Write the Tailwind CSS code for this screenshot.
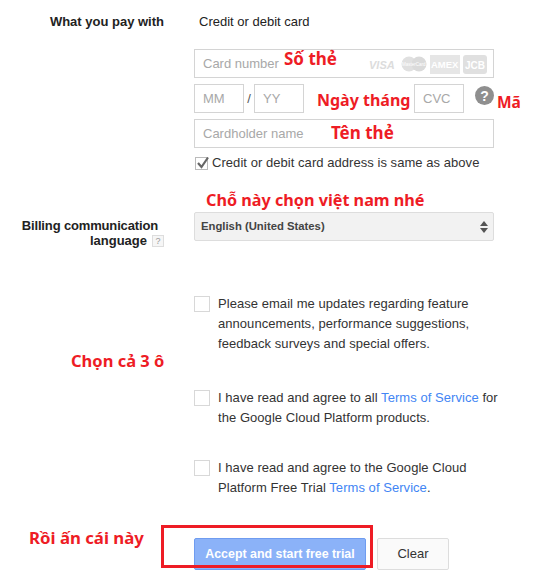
<!DOCTYPE html>
<html lang="en">
  <head>
    <meta charset="UTF-8">
    <title>Billing</title>
    <script src="https://cdn.jsdelivr.net/npm/@tailwindcss/browser@4"></script>
  </head>
  <body class="bg-white">
    <div class="relative w-[540px] h-[579px] overflow-hidden font-['Liberation_Sans',Arial,sans-serif] text-[13px] leading-5 text-[#333]">
      <!-- payment -->
      <div class="flex pt-[12px]">
        <div class="w-[164px] text-right font-bold text-[#222]">What you pay with</div>
        <div class="ml-[30px] w-[300px]">
          <div class="pl-[5px] text-[#222]">Credit or debit card</div>
          <div class="mt-[17px] h-[29px] border border-[#d4d4d4] flex items-center pl-[8px] pr-[3px] text-[#a8a8a8]">
            <span>Card number</span>
            <svg class="ml-auto" width="122" height="20" viewBox="0 0 122 20">
              <text x="1" y="14.500" font-family="Liberation Sans" font-weight="bold" font-style="italic" font-size="11" fill="#dcdcdc">VISA</text>
              <circle cx="41" cy="10" r="7.500" fill="#e0e0e0"/>
              <circle cx="51" cy="10" r="7.500" fill="#dadada"/>
              <text x="34" y="12" font-family="Liberation Sans" font-size="4.500" fill="#fff">MasterCard</text>
              <rect x="62" y="1" width="30" height="19" fill="#e6e6e6"/>
              <text x="63" y="14" font-family="Liberation Sans" font-weight="bold" font-size="9.500" fill="#fff">AMEX</text>
              <rect x="95" y="1" width="24" height="19" rx="3" fill="#e0e0e0"/>
              <text x="97" y="14.500" font-family="Liberation Sans" font-weight="bold" font-size="10" fill="#fff">JCB</text>
            </svg>
          </div>
          <div class="mt-[6px] flex items-center">
            <div class="w-[50px] h-[29px] border border-[#d4d4d4] flex items-center pl-[8px] text-[#a8a8a8]">MM</div>
            <span class="w-[10px] text-center text-[#555]">/</span>
            <div class="w-[50px] h-[29px] border border-[#d4d4d4] flex items-center pl-[8px] text-[#a8a8a8]">YY</div>
            <div class="ml-[110px] w-[50px] h-[29px] border border-[#d4d4d4] flex items-center pl-[8px] text-[#a8a8a8]">CVC</div>
            <div class="ml-[11px] -mt-[6px] w-[19px] h-[19px] rounded-full bg-[#8f8f8f] text-white font-bold text-[14px] flex items-center justify-center">?</div>
          </div>
          <div class="mt-[6px] h-[29px] border border-[#d4d4d4] flex items-center pl-[8px] text-[#a8a8a8]">Cardholder name</div>
          <div class="mt-[5px] flex items-start tracking-[0.05px]">
            <div class="ml-[1px] mt-[4px] w-[13px] h-[13px] border border-[#bbb] relative">
              <svg class="absolute -top-[3px] left-0" width="14" height="15" viewBox="0 0 14 15"><path d="M2 8l3.500 4L12 2.500" fill="none" stroke="#666" stroke-width="2.200"/></svg>
            </div>
            <span class="ml-[4px]">Credit or debit card address is same as above</span>
          </div>
        </div>
      </div>

      <!-- language -->
      <div class="flex mt-[39px]">
        <div class="w-[164px] text-right font-bold text-[#222] leading-[15px] pt-[6px]">
          <div class="pr-[6px] tracking-[-0.15px]">Billing communication</div>
          <div class="flex justify-end items-center gap-[5px]">
            <span>language</span>
            <span class="w-[12px] h-[12px] border border-[#ddd] bg-[#f6f6f6] text-[#999] text-[9px] leading-[10px] font-normal text-center">?</span>
          </div>
        </div>
        <div class="ml-[30px] w-[300px] h-[29px] rounded-[2px] border border-[#ddd] bg-[#f2f2f2] flex items-center justify-between pl-[6px] pr-[5px] text-[11.3px] font-bold text-[#444]">
          <span class="-mt-[1px]">English (United States)</span>
          <span class="flex flex-col gap-[2px]">
            <span class="w-0 h-0 border-x-[4px] border-x-transparent border-b-[5px] border-b-[#555]"></span>
            <span class="w-0 h-0 border-x-[4px] border-x-transparent border-t-[5px] border-t-[#555]"></span>
          </span>
        </div>
      </div>

      <!-- agreements -->
      <div class="ml-[194px] w-[310px] mt-[46px] whitespace-nowrap tracking-[0.05px]">
        <div class="flex">
          <div class="w-[16px] h-[16px] mt-[2px] border border-[#d8d8d8] shrink-0"></div>
          <p class="ml-[8px]">Please email me updates regarding feature<br>announcements, performance suggestions,<br>feedback surveys and special offers.</p>
        </div>
        <div class="flex mt-[34px]">
          <div class="w-[16px] h-[16px] mt-[2px] border border-[#d8d8d8] shrink-0"></div>
          <p class="ml-[8px]">I have read and agree to all <span class="text-[#4285f4]">Terms of Service</span> for<br>the Google Cloud Platform products.</p>
        </div>
        <div class="flex mt-[30px]">
          <div class="w-[16px] h-[16px] mt-[2px] border border-[#d8d8d8] shrink-0"></div>
          <p class="ml-[8px]">I have read and agree to the Google Cloud<br>Platform Free Trial <span class="text-[#4285f4]">Terms of Service</span>.</p>
        </div>
      </div>

      <!-- actions -->
      <div class="ml-[194px] mt-[40px] flex gap-[11px]">
        <button class="w-[172px] h-[32px] rounded-[2px] border border-[#6f9cf0] bg-[#8bb2f8] text-white font-bold text-[12.4px]">Accept and start free trial</button>
        <button class="w-[72px] h-[32px] rounded-[2px] border border-[#ddd] bg-[#fafafa] text-[#333]">Clear</button>
      </div>

      <!-- red notes pasted over the form -->
      <div class="font-['Noto_Sans',sans-serif] font-bold text-[#ee1c25] leading-5">
        <span class="absolute left-[284px] top-[49px] text-[17px]">Số thẻ</span>
        <span class="absolute left-[317px] top-[90px] text-[16px]">Ngày tháng</span>
        <span class="absolute left-[497px] top-[92px] text-[15.500px]">Mã</span>
        <span class="absolute left-[331px] top-[123px] text-[17px]">Tên thẻ</span>
        <span class="absolute left-[206px] top-[190px] text-[16.200px]">Chỗ này chọn việt nam nhé</span>
        <span class="absolute left-[71px] top-[351px] text-[16.500px]">Chọn cả 3 ô</span>
        <span class="absolute left-[29px] top-[528px] text-[16.800px]">Rồi ấn cái này</span>
      </div>
      <div class="absolute left-[161px] top-[525px] w-[212px] h-[43px] border-[3px] border-[#ee1c25]"></div>
    </div>
  </body>
</html>
